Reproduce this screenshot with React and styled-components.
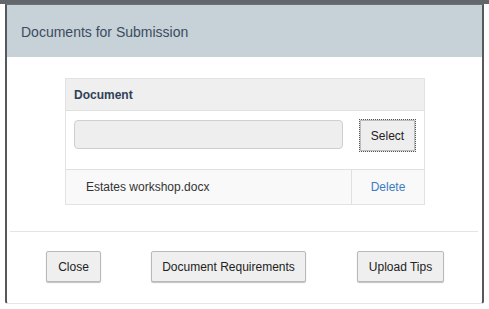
import React from 'react'
import styled, { createGlobalStyle } from 'styled-components'

const Global = createGlobalStyle`
  html, body {
    margin: 0;
    padding: 0;
    background: #fff;
    font-family: "Liberation Sans", Arial, sans-serif;
  }
`

const Page = styled.div`
  width: 489px;
  height: 309px;
  box-sizing: border-box;
  border-top: 4px solid #63676b;
  padding: 0 5px 0 5px;
`

const Dialog = styled.div`
  width: 479px;
  height: 300px;
  box-sizing: border-box;
  border-left: 2px solid #55595c;
  border-right: 2px solid #55595c;
  border-top: 1px solid #6e7377;
  border-bottom: 1px solid #e6e6e6;
  border-radius: 0 0 3px 3px;
  display: flex;
  flex-direction: column;
`

const Header = styled.div`
  height: 52px;
  background: #c6d1d8;
  display: flex;
  align-items: center;
  padding: 2px 0 0 14px;
  box-sizing: border-box;
  color: #3b4c5e;
  font-size: 14px;
`

const Body = styled.div`
  padding: 21px 0 0 58px;
`

const Table = styled.div`
  width: 360px;
  border: 1px solid #e2e2e2;
  box-sizing: border-box;
`

const HeadRow = styled.div`
  height: 31px;
  background: #efefef;
  border-bottom: 1px solid #e0e0e0;
  display: flex;
  align-items: center;
  padding-left: 8px;
  font-size: 12px;
  font-weight: bold;
  color: #2f4156;
`

const UploadRow = styled.div`
  height: 59px;
  border-bottom: 1px solid #e0e0e0;
  display: flex;
  align-items: flex-start;
  padding: 9px 8px 0 8px;
  box-sizing: border-box;
  gap: 16px;
`

const FileInput = styled.div`
  width: 269px;
  height: 29px;
  box-sizing: border-box;
  background: #eeeeee;
  border: 1px solid #cfcfcf;
  border-radius: 4px;
`

const SelectButton = styled.button`
  margin-top: -1px;
  width: 57px;
  height: 33px;
  background: #eeeeee;
  border: 1px dotted #555;
  box-shadow: inset 0 0 0 1px #bdbdbd;
  font-family: inherit;
  font-size: 12px;
  color: #222;
  padding: 0;
`

const FileRow = styled.div`
  height: 34px;
  background: #f9f9f9;
  display: flex;
  align-items: stretch;
  font-size: 12px;
`

const FileName = styled.div`
  flex: 1;
  display: flex;
  align-items: center;
  padding-left: 20px;
  color: #333;
  border-right: 1px solid #e0e0e0;
`

const DeleteCell = styled.div`
  width: 72px;
  display: flex;
  align-items: center;
  justify-content: center;
  color: #3d7cc4;
`

const Divider = styled.div`
  margin: 26px 4px 0 3px;
  height: 1px;
  background: #e4e4e4;
`

const Footer = styled.div`
  display: flex;
  align-items: center;
  padding: 19px 0 0 39px;
`

const Button = styled.button`
  height: 31px;
  width: ${p => p.$w}px;
  margin-right: ${p => p.$gap || 0}px;
  background: #efefef;
  border: 1px solid #b9b9b9;
  border-radius: 2px;
  box-shadow: 0 1px 1px rgba(0, 0, 0, 0.25);
  font-family: inherit;
  font-size: 12px;
  color: #222;
  padding: 0;
`

export default function App() {
  return (
    <>
      <Global />
      <Page>
        <Dialog>
          <Header>Documents for Submission</Header>
          <Body>
            <Table>
              <HeadRow>Document</HeadRow>
              <UploadRow>
                <FileInput />
                <SelectButton>Select</SelectButton>
              </UploadRow>
              <FileRow>
                <FileName>Estates workshop.docx</FileName>
                <DeleteCell>Delete</DeleteCell>
              </FileRow>
            </Table>
          </Body>
          <Divider />
          <Footer>
            <Button $w={55} $gap={50}>Close</Button>
            <Button $w={155} $gap={51}>Document Requirements</Button>
            <Button $w={87}>Upload Tips</Button>
          </Footer>
        </Dialog>
      </Page>
    </>
  )
}
